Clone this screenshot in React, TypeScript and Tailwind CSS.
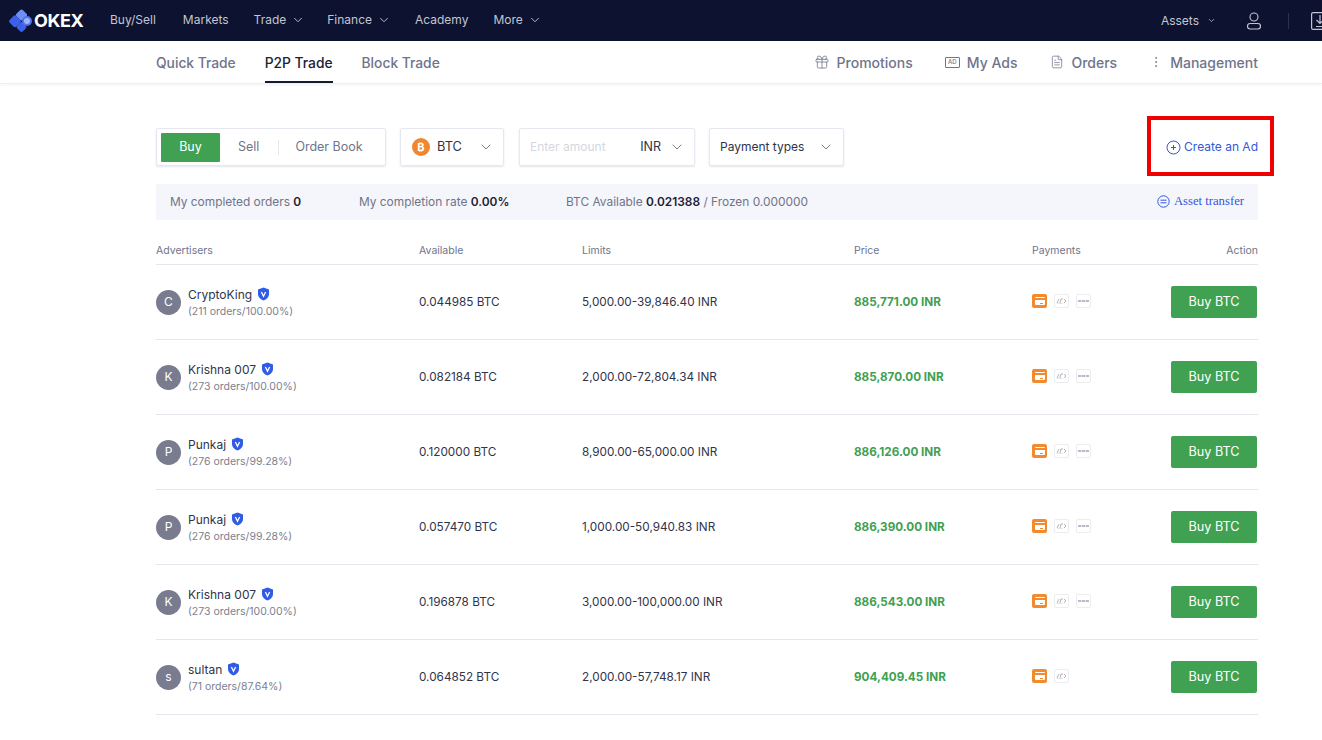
import { ChevronDown, Gift, FileText, MoreVertical } from "lucide-react";

const rows = [
  { letter: "C", name: "CryptoKing", stats: "(211 orders/100.00%)", available: "0.044985 BTC", limits: "5,000.00-39,846.40 INR", price: "885,771.00 INR", pays: 3 },
  { letter: "K", name: "Krishna 007", stats: "(273 orders/100.00%)", available: "0.082184 BTC", limits: "2,000.00-72,804.34 INR", price: "885,870.00 INR", pays: 3 },
  { letter: "P", name: "Punkaj", stats: "(276 orders/99.28%)", available: "0.120000 BTC", limits: "8,900.00-65,000.00 INR", price: "886,126.00 INR", pays: 3 },
  { letter: "P", name: "Punkaj", stats: "(276 orders/99.28%)", available: "0.057470 BTC", limits: "1,000.00-50,940.83 INR", price: "886,390.00 INR", pays: 3 },
  { letter: "K", name: "Krishna 007", stats: "(273 orders/100.00%)", available: "0.196878 BTC", limits: "3,000.00-100,000.00 INR", price: "886,543.00 INR", pays: 3 },
  { letter: "s", name: "sultan", stats: "(71 orders/87.64%)", available: "0.064852 BTC", limits: "2,000.00-57,748.17 INR", price: "904,409.45 INR", pays: 2 },
];

const Logo = () => (
  <svg width="25" height="24" viewBox="0 0 25 24" className="shrink-0">
    <rect x="8" y="1.5" width="9" height="9" rx="2.2" transform="rotate(45 12.5 6)" fill="#6f8ff3" />
    <rect x="1.2" y="7.5" width="9.5" height="9.5" rx="2.2" transform="rotate(45 6 12.25)" fill="#3c60ea" />
    <rect x="8.5" y="14" width="8" height="8" rx="2" transform="rotate(45 12.5 18)" fill="#3c60ea" />
    <circle cx="18" cy="12" r="5" fill="#4f74ee" />
    <circle cx="18" cy="12" r="3" fill="#9db3f6" />
  </svg>
);

const NavLink = ({ label, caret }: { label: string; caret?: boolean }) => (
  <span className="flex items-center gap-[5px] text-[12px] text-[#c3c6d2]">
    {label}
    {caret && <ChevronDown className="w-[14px] h-[14px] -mr-[3px]" strokeWidth={1.6} />}
  </span>
);

const Shield = () => (
  <svg width="13" height="14" viewBox="0 0 13 14">
    <path d="M6.5 0.5 L12 2.5 V7 C12 10 9.5 12.5 6.5 13.5 C3.5 12.5 1 10 1 7 V2.5 Z" fill="#2f5be7" />
    <path d="M4.4 5 L6.5 9.2 L8.6 5" fill="none" stroke="#fff" strokeWidth="1.3" />
  </svg>
);

const CardIcon = () => (
  <span className="flex w-[15px] h-[14px] items-center justify-center rounded-[2px] bg-[#f28a30]">
    <span className="flex w-[10px] h-[8px] flex-col justify-between rounded-[1px] bg-white py-[1px]">
      <span className="h-[2px] bg-[#f28a30]" />
      <span className="ml-[5px] h-[1px] w-[3px] bg-[#f28a30]" />
    </span>
  </span>
);

// tiny wallet logos, only legible as a faint smudge at this size
const UpiMark = () => (
  <svg width="11" height="6" viewBox="0 0 11 6" fill="none">
    <path d="M1 5 L3 1 M4 5 L5 1 H7" stroke="#a9acbd" strokeWidth="0.9" />
    <path d="M8 1 L10 3 L8 5" stroke="#d9a27c" strokeWidth="0.9" />
    <path d="M1 5.5 H7" stroke="#d2d4de" strokeWidth="0.6" />
  </svg>
);

const PaytmMark = () => (
  <svg width="11" height="4" viewBox="0 0 11 4">
    <rect x="0" y="1" width="11" height="2" fill="#b9bbcb" />
    <rect x="3" y="1" width="1" height="2" fill="#e4e5ec" />
    <rect x="7" y="1" width="1" height="2" fill="#e4e5ec" />
  </svg>
);

const PayIcon = ({ children }: { children: React.ReactNode }) => (
  <span className="flex w-[15px] h-[14px] items-center justify-center rounded-[2px] border border-[#ecedf1]">
    {children}
  </span>
);

const Row = ({ row }: { row: (typeof rows)[number] }) => (
  <div className="grid grid-cols-[263px_163px_272px_178px_1fr] items-center h-[75px] border-b border-[#e6e7ee] text-[11.75px] text-[#30344a]">
    <div className="flex items-center gap-[7px]">
      <span className="flex w-[25px] h-[25px] items-center justify-center rounded-full bg-[#797c8f] text-[12px] text-white">
        {row.letter}
      </span>
      <div className="flex flex-col gap-[2px]">
        <span className="flex items-center gap-[5px] text-[12px] leading-[17px]">
          {row.name}
          <Shield />
        </span>
        <span className="text-[10.5px] leading-[14px] text-[#7c7f92]">{row.stats}</span>
      </div>
    </div>
    <span className="pt-px">{row.available}</span>
    <span className="pt-px">{row.limits}</span>
    <span className="pt-px text-[11.7px] font-bold text-[#3fa052]">{row.price}</span>
    <div className="flex items-center justify-between pr-px">
      <div className="flex items-center gap-[7px] mb-[2px]">
        <CardIcon />
        <PayIcon>
          <UpiMark />
        </PayIcon>
        {row.pays > 2 && (
          <PayIcon>
            <PaytmMark />
          </PayIcon>
        )}
      </div>
      <button className="w-[86px] h-[32px] rounded-[2px] bg-[#40a152] text-[12.7px] text-white">Buy BTC</button>
    </div>
  </div>
);

export default function App() {
  return (
    <div className="relative w-[1322px] h-[740px] overflow-hidden bg-white font-['Inter',sans-serif]">
      {/* Top nav */}
      <header className="flex items-center justify-between h-[41px] bg-[#0c122f]">
        <div className="flex items-center pl-[9px]">
          <Logo />
          <span className="w-[53px] text-[18px] font-bold tracking-tight text-white">OKEX</span>
          <nav className="ml-[23px] mb-[2px] flex items-center gap-[25px]">
            <span className="mr-[2px]">
              <NavLink label="Buy/Sell" />
            </span>
            <NavLink label="Markets" />
            <NavLink label="Trade" caret />
            <span className="mr-[2px]">
              <NavLink label="Finance" caret />
            </span>
            <NavLink label="Academy" />
            <NavLink label="More" caret />
          </nav>
        </div>
        <div className="flex items-center text-[#c3c6d2] -mr-[7px]">
          <span className="flex items-center gap-[8px] text-[12px]">
            Assets
            <ChevronDown className="w-[9px] h-[9px]" strokeWidth={2} />
          </span>
          <svg width="16" height="18" viewBox="0 0 16 18" fill="none" stroke="#c3c6d2" strokeWidth="1.1" className="ml-[30px]">
            <circle cx="8" cy="5" r="4" />
            <rect x="1.5" y="11.5" width="13" height="5.5" rx="2.7" />
          </svg>
          <span className="ml-[26px] h-[16px] w-px bg-[#2c3150]" />
          <svg width="18" height="18" viewBox="0 0 18 18" fill="none" stroke="#c3c6d2" strokeWidth="1.2" className="ml-[22px]">
            <rect x="0.6" y="0.6" width="16.8" height="16.8" rx="1.5" />
            <path d="M9 3 V11 M5.5 8 L9 11.5 L12.5 8 M5 14.5 H13" />
          </svg>
        </div>
      </header>

      {/* Sub nav */}
      <div className="flex items-center justify-between h-[43px] pl-[156px] pr-[64px] border-b border-[#eceef3] shadow-[0_1px_3px_rgba(20,25,60,0.05)]">
        <div className="flex items-center gap-[29px] h-full text-[13.8px] font-medium text-[#70748a]">
          <span className="pt-[2px]">Quick Trade</span>
          <span className="flex items-center h-full border-b-2 border-[#161a2e] text-[#1d2135] pt-[4px]">P2P Trade</span>
          <span className="pt-[2px]">Block Trade</span>
        </div>
        <div className="flex items-center text-[14px] font-medium text-[#70748a]">
          <span className="flex items-center gap-[7px]">
            <Gift className="w-[16px] h-[16px]" strokeWidth={1.2} />
            Promotions
          </span>
          <span className="ml-[32px] flex items-center gap-[7px]">
            <span className="flex w-[15px] h-[11px] items-center justify-center rounded-[1px] border border-[#70748a] text-[6px] leading-none">AD</span>
            My Ads
          </span>
          <span className="ml-[33px] flex items-center gap-[7px]">
            <FileText className="w-[14px] h-[16px]" strokeWidth={1.3} />
            Orders
          </span>
          <span className="ml-[32px] flex items-center gap-[7px]">
            <MoreVertical className="w-[14px] h-[14px]" strokeWidth={1.3} />
            Management
          </span>
        </div>
      </div>

      <main className="ml-[156px] w-[1102px]">
        {/* Filters */}
        <div className="flex items-center justify-between mt-[44px] h-[38px]">
          <div className="flex items-center h-full text-[12px]">
            <div className="flex items-center w-[230px] h-full p-[4px] rounded-[2px] border border-[#e6e7f0] shadow-[0_1px_2px_rgba(40,50,110,0.12)] text-[12.5px]">
              <span className="flex items-center justify-center w-[59px] h-[29px] rounded-[1px] bg-[#40a152] text-white">Buy</span>
              <span className="ml-[18px] text-[#70748a]">Sell</span>
              <span className="ml-[19px] h-[15px] w-px bg-[#e6e7ee]" />
              <span className="ml-[16px] text-[#70748a]">Order Book</span>
            </div>
            <div className="ml-[14px] flex items-center w-[104px] h-full pl-[11px] pr-[9px] rounded-[2px] border border-[#e6e7f0] shadow-[0_1px_2px_rgba(40,50,110,0.12)] text-[12.8px] text-[#30344a]">
              <span className="flex items-center justify-center w-[18px] h-[18px] rounded-full bg-[#f0862f] text-[11px] font-bold text-white">₿</span>
              <span className="ml-[7px]">BTC</span>
              <ChevronDown className="ml-auto w-[16px] h-[16px] text-[#70748a]" strokeWidth={1.4} />
            </div>
            <div className="ml-[15px] flex items-center w-[176px] h-full pl-[10px] pr-[9px] rounded-[2px] border border-[#e6e7f0] shadow-[0_1px_2px_rgba(40,50,110,0.12)]">
              <span className="text-[#d5d7e0]">Enter amount</span>
              <span className="ml-auto text-[12.5px] text-[#30344a]">INR</span>
              <ChevronDown className="ml-[8px] w-[16px] h-[16px] text-[#70748a]" strokeWidth={1.4} />
            </div>
            <div className="ml-[14px] flex items-center w-[135px] h-full pl-[10px] pr-[9px] rounded-[2px] border border-[#e6e7f0] shadow-[0_1px_2px_rgba(40,50,110,0.12)] text-[#30344a]">
              <span>Payment types</span>
              <ChevronDown className="ml-auto w-[16px] h-[16px] text-[#70748a]" strokeWidth={1.4} />
            </div>
          </div>
          <span className="flex items-center gap-[3px] text-[12px] text-[#3557d8]">
            <svg width="15" height="15" viewBox="0 0 15 15" fill="none" stroke="#3557d8" strokeWidth="1">
              <circle cx="7.5" cy="7.5" r="6.5" />
              <path d="M7.5 5 V10 M5 7.5 H10" />
            </svg>
            Create an Ad
          </span>
        </div>

        {/* Account summary */}
        <div className="flex items-center justify-between mt-[18px] h-[36px] pl-[14px] pr-[14px] bg-[#f5f6fb] text-[11.9px] text-[#70748a]">
          <div className="flex items-center">
            <span className="w-[189px]">My completed orders <b className="font-semibold text-[#1d2135]">0</b></span>
            <span className="w-[207px]">My completion rate <b className="font-semibold text-[#1d2135]">0.00%</b></span>
            <span>BTC Available <b className="font-semibold text-[#1d2135]">0.021388</b> / Frozen 0.000000</span>
          </div>
          <span className="flex items-center gap-[4px] font-['Liberation_Serif',serif] text-[12.7px] text-[#3557d8]">
            <svg width="13" height="13" viewBox="0 0 13 13" fill="none" stroke="#3557d8" strokeWidth="1">
              <circle cx="6.5" cy="6.5" r="5.7" />
              <path d="M3.5 5.2 H9.5 M3.5 7.8 H9.5" />
            </svg>
            Asset transfer
          </span>
        </div>

        {/* Ads table */}
        <div className="grid grid-cols-[263px_163px_272px_178px_1fr] items-center h-[45px] pt-[18px] border-b border-[#e6e7ee] text-[10.5px] text-[#70748a]">
          <span>Advertisers</span>
          <span>Available</span>
          <span>Limits</span>
          <span>Price</span>
          <div className="flex justify-between">
            <span>Payments</span>
            <span>Action</span>
          </div>
        </div>
        {rows.map((row, i) => (
          <Row key={i} row={row} />
        ))}
      </main>

      {/* Annotation box */}
      <div className="absolute left-[1147px] top-[116px] w-[127px] h-[60px] border-[4px] border-[#f00000]" />
    </div>
  );
}
